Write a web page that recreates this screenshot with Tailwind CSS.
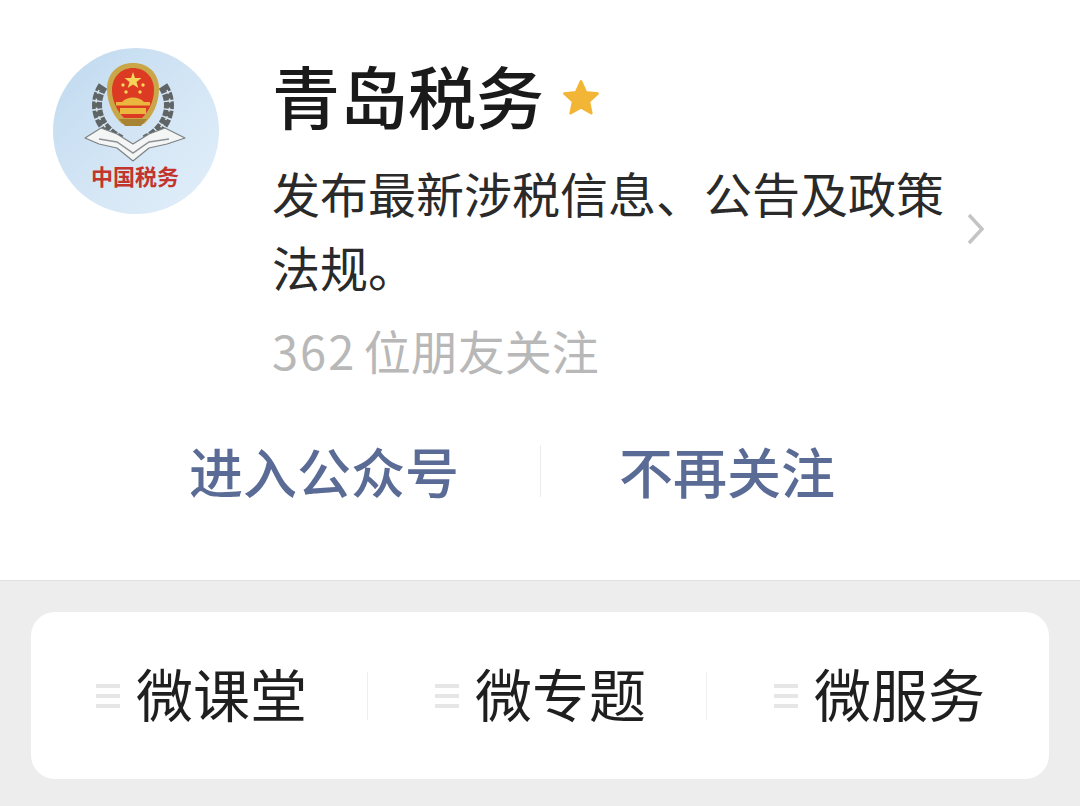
<!DOCTYPE html>
<html lang="zh">
<head>
<meta charset="utf-8">
<script src="https://cdn.jsdelivr.net/npm/@tailwindcss/browser@4"></script>
</head>
<body class="m-0 bg-[#ededed] font-['Noto_Sans_CJK_SC','Noto_Sans',sans-serif]">
<div class="w-[1080px] h-[806px] overflow-hidden flex flex-col">
  <section class="h-[581px] shrink-0 bg-white border-b border-[#e0e0e0] flex flex-col">
    <div class="flex pl-[53px] pt-[48px]">
      <div class="w-[166px] h-[166px] shrink-0 rounded-full bg-gradient-to-br from-[#bfd9ef] via-[#d3e5f5] to-[#e2eff9] flex flex-col items-center overflow-hidden">
        <svg width="104" height="104" viewBox="0 0 104 104" class="mt-[12px] -ml-[2px] shrink-0 blur-[0.5px]">
          <path d="M20 26 C8 44 14 68 38 80" fill="none" stroke="#5f6566" stroke-width="10" stroke-dasharray="7 1.500"/>
          <path d="M80 26 C92 44 86 68 62 80" fill="none" stroke="#5f6566" stroke-width="10" stroke-dasharray="7 1.500"/>
          <path d="M16 30 C9 46 15 64 32 76" fill="none" stroke="#dfe5e6" stroke-width="1.500" stroke-dasharray="4 5"/>
          <path d="M84 30 C91 46 85 64 68 76" fill="none" stroke="#dfe5e6" stroke-width="1.500" stroke-dasharray="4 5"/>
          <path d="M50 3 C35 3 24 13 24 29 C24 44 31 57 39 64 H61 C69 57 76 44 76 29 C76 13 65 3 50 3Z" fill="#c9a648"/>
          <path d="M50 8 C38 8 29 17 29 30 C29 42 35 52 41 58 H59 C65 52 71 42 71 30 C71 17 62 8 50 8Z" fill="#dc3a22"/>
          <polygon points="50,12 52,18 58.500,18 53.500,22 55.300,28 50,24.500 44.700,28 46.500,22 41.500,18 48,18" fill="#f6d65a"/>
          <circle cx="40" cy="25" r="1.700" fill="#f6d65a"/><circle cx="60" cy="25" r="1.700" fill="#f6d65a"/><circle cx="43" cy="32" r="1.700" fill="#f6d65a"/><circle cx="57" cy="32" r="1.700" fill="#f6d65a"/>
          <path d="M39 42 C44 36 56 36 61 42Z" fill="#eab63d"/>
          <rect x="33" y="42" width="34" height="3.500" fill="#eab63d"/>
          <rect x="37" y="48" width="26" height="6" fill="#eab63d"/>
          <path d="M36 59 H64 L58 66 H42Z" fill="#a98334"/>
          <path d="M2 78 L18 68 L34 74 L50 84 L66 74 L82 68 L102 78 L84 84 L66 88 L50 101 L34 88 L16 84Z" fill="#f4f5f5" stroke="#7c8284" stroke-width="1.200" stroke-linejoin="round"/>
          <path d="M16 79 L34 82 L50 93 L66 82 L86 79" fill="none" stroke="#8c9294" stroke-width="1.500"/>
        </svg>
        <span class="text-[22px] leading-[26px] font-bold text-[#c2342c] -mt-[2px] -ml-[2px] whitespace-nowrap">中国税务</span>
      </div>
      <div class="ml-[53px] w-[682px] shrink-0">
        <div class="flex items-center h-[100px]">
          <h1 class="m-0 self-start text-[68px] leading-[94px] font-medium text-[#1a1a1a] whitespace-nowrap">青岛税务</h1>
          <svg width="42" height="42" viewBox="0 0 24 24" class="ml-[16px] shrink-0">
            <path d="M12 2.500 L14.800 8.700 L21.500 9.500 L16.500 14 L17.900 20.700 L12 17.300 L6.100 20.700 L7.500 14 L2.500 9.500 L9.200 8.700Z" fill="#f2b535" stroke="#f2b535" stroke-width="1.500" stroke-linejoin="round"/>
          </svg>
        </div>
        <p class="m-0 mt-[7px] text-[48px] leading-[74px] text-[#2a2a2a]">发布最新涉税信息、公告及政策<br>法规。</p>
        <p class="m-0 mt-[17px] text-[47px] leading-[60px] text-[#b8b8b8] whitespace-nowrap"><span class="tracking-[2px] mr-[-3px]">362</span> 位朋友关注</p>
      </div>
      <svg width="20" height="34" viewBox="0 0 20 34" class="ml-[12px] mt-[164px] shrink-0">
        <path d="M3 3 L16 17 L3 31" fill="none" stroke="#c4c4c4" stroke-width="3.500"/>
      </svg>
    </div>
    <div class="flex items-center mt-[61px] h-[60px] ml-[189px]">
      <span class="w-[270px] text-[54px] leading-[60px] font-medium text-[#5a6b96] whitespace-nowrap">进入公众号</span>
      <span class="ml-[81px] w-px h-[52px] bg-[#ececec]"></span>
      <span class="ml-[78px] text-[54px] leading-[60px] font-medium text-[#5a6b96] whitespace-nowrap">不再关注</span>
    </div>
  </section>
  <div class="mx-[31px] mt-[31px] h-[167px] rounded-[24px] bg-white flex items-center pl-[65px]">
    <div class="flex items-center w-[339px]">
      <span class="flex flex-col gap-[6px] w-[24px] mr-[16px] shrink-0"><i class="block h-[4px] bg-[#e6e6e6]"></i><i class="block h-[4px] bg-[#e6e6e6]"></i><i class="block h-[4px] bg-[#e6e6e6]"></i></span>
      <span class="pb-[7px] text-[57px] leading-[70px] text-[#1f1f1f] whitespace-nowrap">微课堂</span>
      <span class="ml-[60px] w-px h-[48px] bg-[#efefef]"></span>
    </div>
    <div class="flex items-center w-[339px]">
      <span class="flex flex-col gap-[6px] w-[24px] mr-[16px] shrink-0"><i class="block h-[4px] bg-[#e6e6e6]"></i><i class="block h-[4px] bg-[#e6e6e6]"></i><i class="block h-[4px] bg-[#e6e6e6]"></i></span>
      <span class="pb-[7px] text-[57px] leading-[70px] text-[#1f1f1f] whitespace-nowrap">微专题</span>
      <span class="ml-[60px] w-px h-[48px] bg-[#efefef]"></span>
    </div>
    <div class="flex items-center">
      <span class="flex flex-col gap-[6px] w-[24px] mr-[16px] shrink-0"><i class="block h-[4px] bg-[#e6e6e6]"></i><i class="block h-[4px] bg-[#e6e6e6]"></i><i class="block h-[4px] bg-[#e6e6e6]"></i></span>
      <span class="pb-[7px] text-[57px] leading-[70px] text-[#1f1f1f] whitespace-nowrap">微服务</span>
    </div>
  </div>
</div>
</body>
</html>
